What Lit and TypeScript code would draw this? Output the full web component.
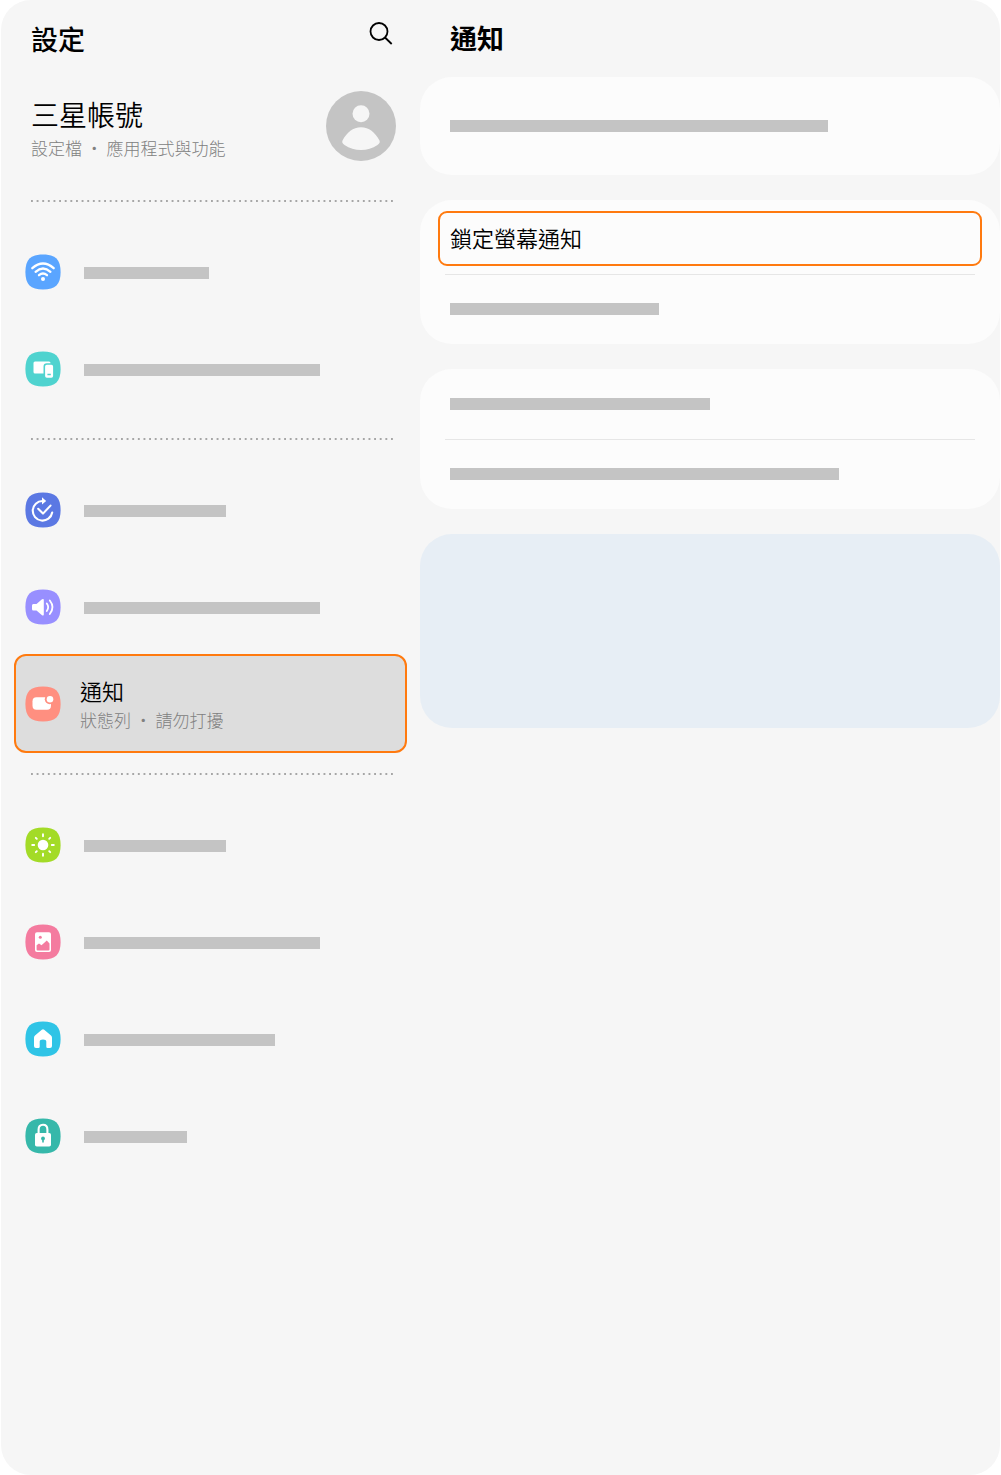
import { LitElement, html, css, svg, nothing } from "lit";
import type { SVGTemplateResult } from "lit";
import { customElement, property } from "lit/decorators.js";

interface Item {
  name: string;
  color: string;
  glyph: SVGTemplateResult;
  bar?: number;
  label?: string;
  detail?: string;
}

/* Glyphs are drawn on a 36 x 36 tile. */
const wifi = svg`
  <g fill="none" stroke="#fff" stroke-width="2.3" stroke-linecap="round">
    <path d="M7.3 14.2Q18 4.8 28.7 14.2" />
    <path d="M10.6 17.8Q18 11.2 25.4 17.8" />
    <path d="M14 21.2Q18 17.8 22 21.2" />
  </g>
  <circle cx="18" cy="25" r="2" fill="#fff" />`;

const devices = svg`
  <rect x="8.5" y="10.5" width="17" height="12" rx="1.5" fill="#fff" />
  <rect x="19.3" y="13" width="9.6" height="14.5" rx="2.5" fill="#fff" stroke="#4fd3cf" stroke-width="1.6" />
  <path d="M22.4 23.5h3.4" stroke="#4fd3cf" stroke-width="1.5" />`;

const routines = svg`
  <g fill="none" stroke="#fff" stroke-width="2.1" stroke-linecap="round" stroke-linejoin="round">
    <path d="M17.5 9A9.8 9.8 0 1 0 27.2 20.5" />
    <path d="M13.2 16.8L18 21.6L25.5 13.6" />
  </g>
  <path d="M17 5.2L21.2 9L17 12.4Z" fill="#fff" />`;

const sound = svg`
  <path d="M8.3 15H11.5L17 10.3Q18.8 9.3 18.8 11V25.5Q18.8 27.2 17 26.2L11.5 21.5H8.3Q7 21.5 7 20V16.5Q7 15 8.3 15Z" fill="#fff" />
  <g fill="none" stroke="#fff" stroke-width="1.8" stroke-linecap="round">
    <path d="M21.8 14.5Q24.6 18.2 21.8 22" />
    <path d="M24.8 11.5Q30.2 18.2 24.8 25" />
  </g>`;

const notice = svg`
  <rect x="7.5" y="11.3" width="18.5" height="12.5" rx="4" fill="#fff" />
  <circle cx="24.8" cy="13.3" r="5" fill="#ff8f80" />
  <circle cx="25" cy="13.3" r="3.3" fill="#fff" />`;

const display = svg`
  <circle cx="18" cy="18" r="5.3" fill="#fff" />
  <path d="M18 9.2V7.2M18 26.8V28.8M9.2 18H7.2M26.8 18H28.8M11.8 11.8L10.8 10.8M24.2 11.8L25.2 10.8M11.8 24.2L10.8 25.2M24.2 24.2L25.2 25.2" stroke="#fff" stroke-width="1.9" stroke-linecap="round" />`;

const wallpaper = svg`
  <rect x="10" y="8.3" width="16" height="19.8" rx="2" fill="#fff" />
  <circle cx="15.3" cy="13.3" r="1.5" fill="#f47b9f" />
  <path d="M11.6 21.3L14 19.4L16.5 21.3L21.8 16.5L24.5 19.4V25.5Q24.5 26.5 23.5 26.5H12.6Q11.6 26.5 11.6 25.5Z" fill="#f47b9f" />`;

const home = svg`
  <path d="M16.8 8.7Q18 7.7 19.2 8.7L26 14.6Q27 15.5 27 16.8V25Q27 27 25 27H22.6Q21.3 27 21.3 25.7V20.5Q21.3 18.5 18 18.5T14.7 20.5V25.7Q14.7 27 13.4 27H11Q9 27 9 25V16.8Q9 15.5 10 14.6Z" fill="#fff" />`;

const lock = svg`
  <path d="M13.6 16V11.5Q13.6 6.8 18 6.8T22.4 11.5V16" fill="none" stroke="#fff" stroke-width="2.1" />
  <rect x="10" y="15" width="16" height="13.5" rx="1.8" fill="#fff" />
  <circle cx="18" cy="20.5" r="1.9" fill="#36b8aa" />
  <path d="M18 20.5V24.5" stroke="#36b8aa" stroke-width="1.6" />`;

const groups: Item[][] = [
  [
    { name: "Wi-Fi", color: "#5aa5ff", glyph: wifi, bar: 125 },
    { name: "已連接的裝置", color: "#4fd3cf", glyph: devices, bar: 236 },
  ],
  [
    { name: "模式與日常程序", color: "#5b78e3", glyph: routines, bar: 142 },
    { name: "音效與震動", color: "#988fff", glyph: sound, bar: 236 },
    { name: "通知", color: "#ff8f80", glyph: notice, label: "通知", detail: "狀態列 ・ 請勿打擾" },
  ],
  [
    { name: "顯示", color: "#a3db27", glyph: display, bar: 142 },
    { name: "桌布與樣式", color: "#f47b9f", glyph: wallpaper, bar: 236 },
    { name: "主螢幕", color: "#2fc4e6", glyph: home, bar: 191 },
    { name: "鎖定螢幕", color: "#36b8aa", glyph: lock, bar: 103 },
  ],
];

@customElement("placeholder-bar")
export class PlaceholderBar extends LitElement {
  @property({ type: Number }) width = 100;

  static styles = css`
    :host {
      display: block;
      min-width: 0;
    }
    .bar {
      height: 12px;
      max-width: 100%;
      background: #c4c4c4;
    }
  `;

  render() {
    return html`<div class="bar" style="width:${this.width}px"></div>`;
  }
}

@customElement("settings-nav")
export class SettingsNav extends LitElement {
  static styles = css`
    :host {
      display: block;
    }
    button {
      font: inherit;
      color: inherit;
      border: 0;
      background: none;
      text-align: left;
      cursor: pointer;
    }
    .top {
      display: flex;
      justify-content: space-between;
      align-items: flex-start;
      padding: 19px 26px 0 30px;
    }
    h1 {
      margin: 0;
      font-size: 27px;
      line-height: 40px;
      font-weight: 500;
    }
    .search {
      padding: 2px 0 0;
    }
    .search svg,
    .avatar,
    .tile {
      display: block;
    }
    .account {
      display: flex;
      width: 100%;
      justify-content: space-between;
      align-items: center;
      padding: 31px 24px 17px 30px;
    }
    .account-text {
      padding-top: 4px;
    }
    .account-name {
      display: block;
      font-size: 28px;
      line-height: 40px;
    }
    .detail {
      display: block;
      font-size: 17px;
      line-height: 28px;
      font-weight: 300;
      color: #808080;
    }
    .dots {
      display: block;
      width: calc(100% - 56px);
      height: 2px;
      margin: 21px 26px 21px 30px;
    }
    ul {
      list-style: none;
      margin: 0;
      padding: 0;
    }
    .row {
      box-sizing: border-box;
      width: 100%;
      height: 97px;
      display: flex;
      align-items: center;
      gap: 23px;
      padding: 0 24px;
    }
    .tile {
      flex: none;
    }
    .row placeholder-bar {
      flex: 1;
      padding-top: 2px;
    }
    .row.active {
      width: calc(100% - 26px);
      height: 99px;
      margin: -1px 13px;
      padding: 0 9px;
      gap: 19px;
      border: 2px solid #ff7a0f;
      border-radius: 12px;
      background: #ddd;
    }
    .label {
      display: block;
      font-size: 22px;
      line-height: 32px;
    }
    .label,
    .account-name {
      font-weight: 350;
    }
  `;

  private divider() {
    return html`<svg class="dots" aria-hidden="true">
      <line x1="0" y1="1" x2="100%" y2="1" stroke="#8c8c8c" stroke-width="1.6" stroke-dasharray="1.875 3.75" />
    </svg>`;
  }

  private row(item: Item) {
    return html`<li>
      <button
        class=${item.label ? "row active" : "row"}
        aria-label=${item.name}
        aria-current=${item.label ? "page" : nothing}
      >
        <svg class="tile" width="36" height="36" viewBox="0 0 36 36" aria-hidden="true">
          <path
            d="M18 .4C30.5 .4 35.6 5.5 35.6 18S30.5 35.6 18 35.6S.4 30.5 .4 18S5.5 .4 18 .4Z"
            fill=${item.color}
          />
          ${item.glyph}
        </svg>
        ${item.label
          ? html`<span>
              <span class="label">${item.label}</span>
              <span class="detail">${item.detail}</span>
            </span>`
          : html`<placeholder-bar .width=${item.bar ?? 0}></placeholder-bar>`}
      </button>
    </li>`;
  }

  render() {
    return html`
      <header class="top">
        <h1>設定</h1>
        <button class="search" aria-label="搜尋">
          <svg width="26" height="26" viewBox="0 0 26 26" aria-hidden="true">
            <g fill="none" stroke="#000" stroke-width="1.8">
              <circle cx="11" cy="10.5" r="8.5" />
              <path d="M17 16.5L23.7 23" />
            </g>
          </svg>
        </button>
      </header>
      <button class="account">
        <span class="account-text">
          <span class="account-name">三星帳號</span>
          <span class="detail">設定檔 ・ 應用程式與功能</span>
        </span>
        <svg class="avatar" width="70" height="70" viewBox="0 0 70 70" aria-hidden="true">
          <circle cx="35" cy="35" r="35" fill="#c4c4c4" />
          <circle cx="35" cy="22.8" r="8.5" fill="#f6f6f6" />
          <path
            d="M16.5 49.5C21 41.5 27 36.3 35 36.3S49 41.5 53.5 49.5C54.3 51.5 53.3 52.8 51.5 54C46.5 57.5 41 59 35 59S23.500 57.5 18.5 54C16.700 52.8 15.700 51.5 16.5 49.5Z"
            fill="#f6f6f6"
          />
        </svg>
      </button>
      <nav aria-label="設定">
        ${groups.map((group) => html`${this.divider()}<ul>${group.map((item) => this.row(item))}</ul>`)}
      </nav>
    `;
  }
}

@customElement("notification-pane")
export class NotificationPane extends LitElement {
  static styles = css`
    :host {
      display: block;
    }
    h2 {
      margin: 0;
      padding: 18px 30px 19px;
      font-size: 27px;
      line-height: 40px;
      font-weight: 700;
    }
    .cards {
      display: flex;
      flex-direction: column;
      gap: 25px;
    }
    .card {
      border-radius: 32px;
      background: #fcfcfc;
    }
    .line {
      box-sizing: border-box;
      display: flex;
      align-items: center;
      height: 70px;
      padding: 0 30px;
    }
    .line.tall {
      height: 98px;
    }
    .rule {
      height: 1px;
      margin: 0 25px -1px;
      border: 0;
      background: #e6e6e6;
    }
    .pick {
      display: flex;
      padding: 11px 18px 8px;
    }
    .pick button {
      flex: 1;
      padding: 0 10px 3px;
      border: 2px solid #ff7a0f;
      border-radius: 9px;
      background: none;
      color: inherit;
      font: inherit;
      font-size: 22px;
      line-height: 48px;
      font-weight: 350;
      text-align: left;
      cursor: pointer;
    }
    .tip {
      height: 194px;
      background: #e7eef5;
    }
  `;

  render() {
    return html`
      <h2>通知</h2>
      <div class="cards">
        <section class="card">
          <div class="line tall"><placeholder-bar .width=${378}></placeholder-bar></div>
        </section>
        <section class="card">
          <div class="pick"><button>鎖定螢幕通知</button></div>
          <hr class="rule" />
          <div class="line"><placeholder-bar .width=${209}></placeholder-bar></div>
        </section>
        <section class="card">
          <div class="line"><placeholder-bar .width=${260}></placeholder-bar></div>
          <hr class="rule" />
          <div class="line"><placeholder-bar .width=${389}></placeholder-bar></div>
        </section>
        <section class="card tip"></section>
      </div>
    `;
  }
}

@customElement("app-root")
export class AppRoot extends LitElement {
  static styles = css`
    :host {
      display: block;
      background: #fff;
      color: #000;
      font-family: "Noto Sans CJK TC", "Noto Sans", sans-serif;
    }
    .screen {
      display: grid;
      grid-template-columns: minmax(0, 419fr) minmax(0, 580fr);
      min-height: 100vh;
      margin: 0 1px;
      border-radius: 30px;
      background: #f6f6f6;
    }
    placeholder-bar {
      flex: 1;
    }
  `;

  render() {
    return html`<div class="screen">
      <settings-nav></settings-nav>
      <notification-pane></notification-pane>
    </div>`;
  }
}
